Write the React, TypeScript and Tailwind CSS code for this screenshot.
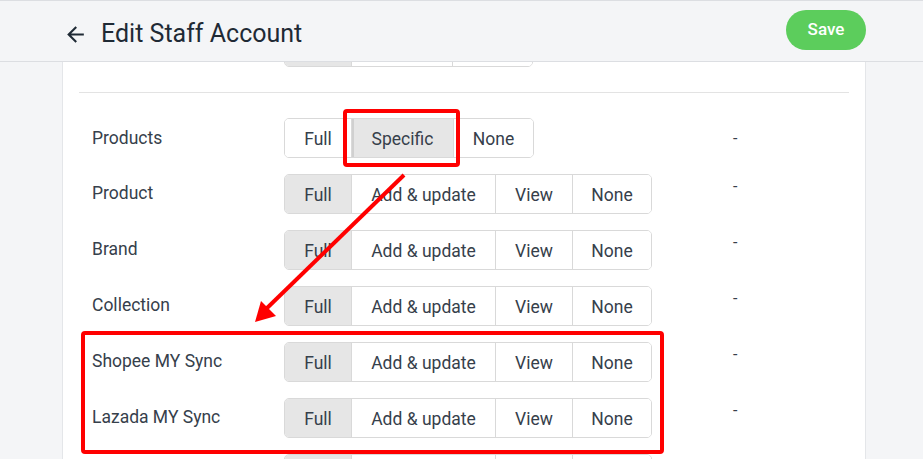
import { MdArrowBack } from "react-icons/md";

type Seg = { label: string; w: string };

const fullSet: Seg[] = [
  { label: "Full", w: "w-[66px]" },
  { label: "Add & update", w: "w-[144px]" },
  { label: "View", w: "w-[77px]" },
  { label: "None", w: "w-[79px]" },
];

const groupSet: Seg[] = [
  { label: "Full", w: "w-[66px]" },
  { label: "Specific", w: "w-[102px]" },
  { label: "None", w: "w-[80px]" },
];

// rows scrolled out of view only show an edge, no text
const hiddenSet: Seg[] = [
  { label: "", w: "w-[66px]" },
  { label: "", w: "w-[101px]" },
  { label: "", w: "w-[80px]" },
];

const hiddenFull: Seg[] = fullSet.map((s) => ({ ...s, label: "" }));

const rows = [
  { name: "Product", items: fullSet },
  { name: "Brand", items: fullSet },
  { name: "Collection", items: fullSet },
  { name: "Shopee MY Sync", items: fullSet },
  { name: "Lazada MY Sync", items: fullSet },
  { name: "", items: hiddenFull },
];

function ButtonGroup({ items, selected }: { items: Seg[]; selected: number }) {
  return (
    <div className="flex h-[40px] rounded-[5px] border border-[#d9d9d9] overflow-hidden">
      {items.map((it, i) => (
        <div
          key={i}
          className={`${it.w} flex items-center justify-center pt-[3px] text-[17.5px] text-[#36404b] ${
            i > 0 ? "border-l border-[#d9d9d9]" : ""
          } ${i === selected ? "bg-[#e6e6e6]" : "bg-white"} ${
            i === selected && i > 0 ? "shadow-[inset_2px_0_0_#d0d0d0]" : ""
          }`}
        >
          {it.label}
        </div>
      ))}
    </div>
  );
}

export default function App() {
  return (
    <div className="relative w-[923px] h-[459px] overflow-hidden bg-[#f4f5f7] font-['Roboto',sans-serif]">
      {/* header */}
      <div className="relative z-10 h-[62px] border-t border-b border-[#dcdee2] bg-[#f4f5f7]">
        <div className="ml-[62px] w-[804px] h-full flex items-center justify-between">
          <div className="flex items-center gap-[13px] pl-[1px] mt-[6px]">
            <MdArrowBack size={25} className="text-[#1f2a35]" />
            <span className="text-[25px] text-[#1f2a35] leading-none pb-[1px]">
              Edit Staff Account
            </span>
          </div>
          <button className="h-[40px] w-[80px] mt-[-2px] rounded-full bg-[#5ccd5c] text-white text-[17px] font-medium">
            Save
          </button>
        </div>
      </div>

      {/* card */}
      <div className="ml-[62px] w-[804px] h-full bg-white border-x border-[#e4e6e9] px-[16px]">
        <div className="h-[5px] overflow-hidden flex items-end pl-[205px]">
          <div className="shrink-0">
            <ButtonGroup items={hiddenSet} selected={0} />
          </div>
        </div>
        <div className="mt-[25px] border-t border-[#e3e3e3]" />

        <div className="pt-[25px] px-[13px] flex flex-col gap-[16px]">
          <div className="flex h-[40px] items-center">
            <div className="w-[192px] text-[17.5px] text-[#36404b]">Products</div>
            <div className="w-[449px]">
              <div className="inline-block">
                <ButtonGroup items={groupSet} selected={1} />
              </div>
            </div>
            <div className="text-[16px] text-[#36404b] pt-[2px]">-</div>
          </div>
          {rows.map((r, i) => (
            <div key={i} className="flex h-[40px]">
              <div className="w-[192px] self-center text-[17.5px] text-[#36404b] pb-[1px]">
                {r.name}
              </div>
              <div className="w-[449px]">
                <div className="inline-block">
                  <ButtonGroup items={r.items} selected={0} />
                </div>
              </div>
              {r.name && (
                <div className="text-[16px] text-[#36404b] leading-[24px] pt-[1px]">-</div>
              )}
            </div>
          ))}
        </div>
      </div>

      {/* annotations */}
      <svg
        className="absolute left-0 top-0 pointer-events-none z-20"
        width="923"
        height="459"
        viewBox="0 0 923 459"
      >
        <rect x="345" y="111" width="113" height="54" rx="2" fill="none" stroke="#ff0000" strokeWidth="4" />
        <rect x="83" y="333" width="579" height="119" rx="2" fill="none" stroke="#ff0000" strokeWidth="4" />
        <line x1="404" y1="175" x2="264" y2="311" stroke="#ff0000" strokeWidth="4" />
        <polygon points="255,322 261,301 276,316" fill="#ff0000" />
      </svg>
    </div>
  );
}
